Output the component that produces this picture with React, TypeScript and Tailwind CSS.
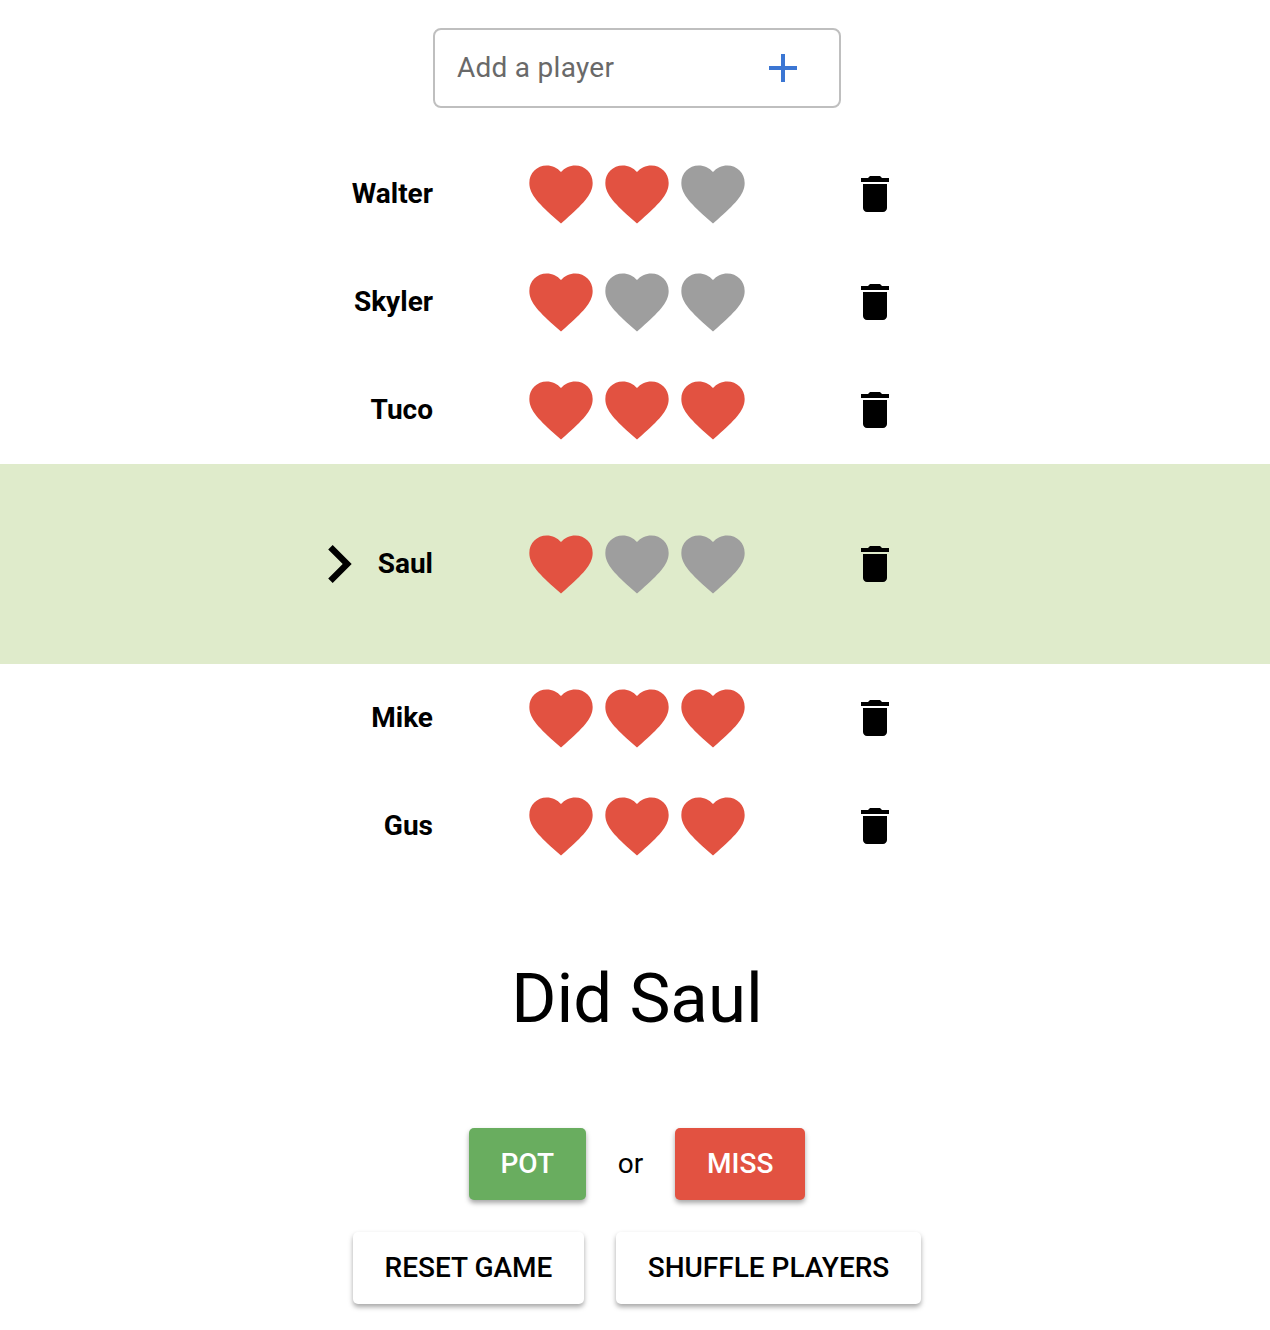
import React from 'react';

const players = [
    { name: 'Walter', lives: 2 },
    { name: 'Skyler', lives: 1 },
    { name: 'Tuco', lives: 3 },
    { name: 'Saul', lives: 1, active: true },
    { name: 'Mike', lives: 3 },
    { name: 'Gus', lives: 3 },
];

const Heart = ({ on }: { on: boolean }) => (
    <svg viewBox="0 0 24 24" className={`w-[76px] h-[76px] ${on ? 'fill-[#e25241]' : 'fill-[#9e9e9e]'}`}>
        <path d="M12 21.35l-1.45-1.32C5.4 15.36 2 12.28 2 8.5 2 5.42 4.42 3 7.5 3c1.74 0 3.41.81 4.5 2.09C13.09 3.81 14.76 3 16.5 3 19.58 3 22 5.42 22 8.5c0 3.78-3.4 6.86-8.55 11.54L12 21.35z" />
    </svg>
);

const Trash = () => (
    <svg viewBox="0 0 24 24" className="w-12 h-12 fill-black">
        <path d="M6 19c0 1.1.9 2 2 2h8c1.1 0 2-.9 2-2V7H6v12zM19 4h-3.5l-1-1h-5l-1 1H5v2h14V4z" />
    </svg>
);

const PlayerRow = ({ name, lives, active }: { name: string; lives: number; active?: boolean }) => (
    <div className={`flex items-center ${active ? 'h-[200px] bg-[#dfebcb]' : 'h-[108px]'}`}>
        <div className="w-[433px] shrink-0 flex items-center justify-end">
            {active && (
                <svg viewBox="0 0 24 24" className="w-[76px] h-[76px] fill-black mr-px">
                    <path d="M10 6L8.59 7.41 13.17 12l-4.58 4.59L10 18l6-6z" />
                </svg>
            )}
            <span className="text-[28px] font-bold text-black leading-none">{name}</span>
        </div>
        <div className="flex ml-[90px]">
            {[0, 1, 2].map(i => <Heart key={i} on={i < lives} />)}
        </div>
        <div className="ml-[100px]">
            <Trash />
        </div>
    </div>
);

export default function App() {
    return (
        <div className="w-[1270px] h-[1330px] overflow-hidden bg-white font-['Roboto',sans-serif] text-black">
            <div className="flex pt-7 pl-[433px] mb-8">
                <div className="w-[408px] h-20 border-2 border-[#bfbfbf] rounded-lg flex items-center pl-[22px]">
                    <input
                        placeholder="Add a player"
                        className="w-[300px] text-[28px] tracking-[0.27px] outline-none bg-transparent placeholder:text-[#696969]"
                    />
                    <svg viewBox="0 0 24 24" className="w-12 h-12 fill-[#3b76d3] ml-[2px]">
                        <path d="M19 13h-6v6h-2v-6H5v-2h6V5h2v6h6v2z" />
                    </svg>
                </div>
            </div>

            {players.map(p => <PlayerRow key={p.name} {...p} />)}

            <div className="w-[1274px] text-center text-[69px] leading-none mt-[84px]">Did Saul</div>

            <div className="w-[1274px] flex justify-center items-center mt-[95px]">
                <button className="w-[117px] h-[72px] rounded-[5px] bg-[#69ad5f] text-white text-[28px] font-medium shadow-[0_3px_5px_rgba(0,0,0,0.35)]">POT</button>
                <span className="text-[28px] mx-[32px]">or</span>
                <button className="w-[130px] h-[72px] rounded-[5px] bg-[#e25241] text-white text-[28px] font-medium shadow-[0_3px_5px_rgba(0,0,0,0.35)]">MISS</button>
            </div>

            <div className="w-[1274px] flex justify-center gap-8 mt-8">
                <button className="w-[231px] h-[72px] rounded-[5px] bg-white text-[28px] font-medium shadow-[0_3px_5px_rgba(0,0,0,0.35)]">RESET GAME</button>
                <button className="w-[305px] h-[72px] rounded-[5px] bg-white text-[28px] font-medium shadow-[0_3px_5px_rgba(0,0,0,0.35)]">SHUFFLE PLAYERS</button>
            </div>
        </div>
    );
}
